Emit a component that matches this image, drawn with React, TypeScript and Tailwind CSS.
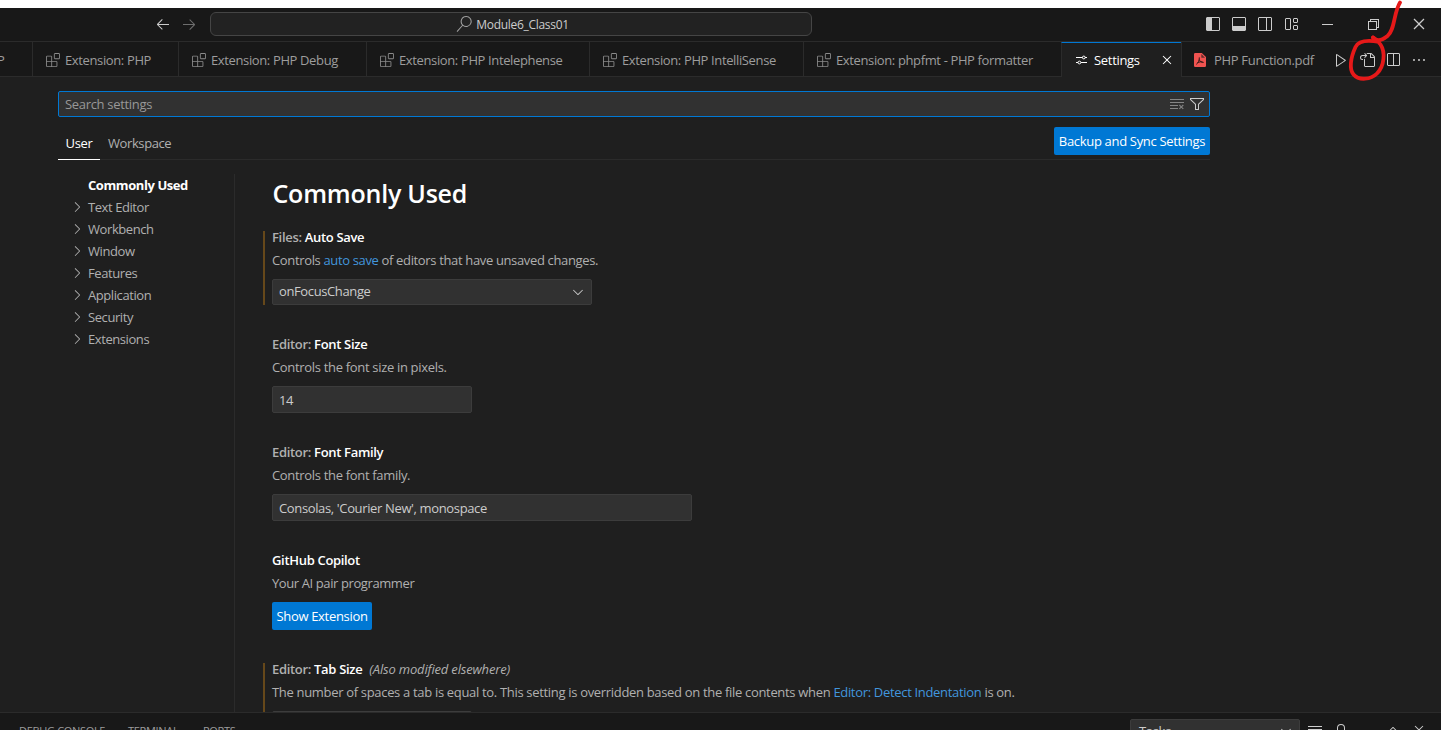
import React from "react";
import {
  VscArrowLeft, VscArrowRight, VscSearch, VscExtensions, VscClose, VscChromeClose,
  VscChromeMinimize, VscChromeRestore, VscPlay, VscGoToFile, VscSplitHorizontal, VscEllipsis,
  VscFilter, VscClearAll, VscChevronRight, VscChevronDown, VscChevronUp, VscLock,
  VscLayoutSidebarLeft, VscLayoutPanel, VscLayoutSidebarRightOff, VscLayout,
} from "react-icons/vsc";

const extensionTabs = [
  { label: "Extension: PHP", box: "w-[146px]" },
  { label: "Extension: PHP Debug", box: "w-[188px]" },
  { label: "Extension: PHP Intelephense", box: "w-[223px]" },
  { label: "Extension: PHP IntelliSense", box: "w-[214px]" },
  { label: "Extension: phpfmt - PHP formatter", box: "w-[258px]" },
];

const groups = ["Text Editor", "Workbench", "Window", "Features", "Application", "Security", "Extensions"];

function TitleBar() {
  return (
    <header className="flex h-[34px] shrink-0 items-center border-b border-[#2b2b2b] bg-[#181818] pb-px text-[#cccccc]">
      <VscArrowLeft className="ml-[155px] size-4" />
      <VscArrowRight className="ml-[10px] size-4 text-[#6e6e6e]" />
      <div className="ml-[13px] flex h-6 w-[602px] items-center justify-center rounded-md border border-[#454545] bg-[#222222]">
        <VscSearch className="mr-1 ml-[3px] size-4 text-[#a0a0a0]" />
        <span className="pt-px text-[12px] tracking-[-0.3px]">Module6_Class01</span>
      </div>
      <div className="ml-[393px] flex items-center gap-[10px]">
        <VscLayoutSidebarLeft className="size-4" />
        <VscLayoutPanel className="size-4" />
        <VscLayoutSidebarRightOff className="size-4" />
        <VscLayout className="size-4" />
      </div>
      <VscChromeMinimize className="ml-[20px] size-4" />
      <VscChromeRestore className="ml-[30px] size-4" />
      <VscChromeClose className="ml-[30px] size-4" />
    </header>
  );
}

function SlidersIcon() {
  return (
    <svg viewBox="0 0 16 16" className="mr-[5px] size-4 shrink-0" fill="none" stroke="currentColor">
      <path d="M3 5.5h6.5M12 5.5h2M3 10.5h2M8 10.5h6" strokeWidth="1.2" />
      <circle cx="10.8" cy="5.5" r="1.4" />
      <circle cx="6.4" cy="10.5" r="1.4" />
    </svg>
  );
}

function PdfIcon() {
  return (
    <svg viewBox="0 0 12 14" className="h-[14px] w-3">
      <path d="M1.2 0h6.6L12 4v8.8a1.2 1.2 0 0 1-1.2 1.2H1.2A1.2 1.2 0 0 1 0 12.8V1.2A1.2 1.2 0 0 1 1.2 0z" fill="#ef5350" />
      <path d="M7.3 1v3.7H11" fill="#181818" opacity=".65" />
      <path d="M2.3 11.3c2-1.2 3.2-4.2 3-6.9M5.3 6.4c.5 2 2 3.2 4.4 3M3.5 9.8c1.7-.9 3.3-1.2 5-1" fill="none" stroke="#301616" strokeWidth="1" />
    </svg>
  );
}

function TabBar() {
  return (
    <nav className="flex h-[35px] shrink-0 bg-[#181818] tracking-[-0.37px] text-[#9d9d9d]">
      <div className="flex w-8 items-center overflow-hidden border-b border-[#2b2b2b] pt-[3px]">
        <span className="-ml-[3px]">P</span>
      </div>
      {extensionTabs.map((t) => (
        <div key={t.label} className={`flex shrink-0 items-center border-b border-l border-[#2b2b2b] pl-[13px] ${t.box}`}>
          <VscExtensions className="mt-px mr-[5px] size-[14px] shrink-0 text-[#8a8a8a]" />
          <span className="whitespace-nowrap pt-[3px]">{t.label}</span>
        </div>
      ))}
      <div className="flex w-[120px] shrink-0 items-center border-t border-l border-l-[#2b2b2b] border-t-[#0078d4] bg-[#1f1f1f] pl-[11px] tracking-[-0.31px] text-white">
        <SlidersIcon />
        <span className="pt-px">Settings</span>
        <VscClose className="ml-auto mr-[6px] size-4" />
      </div>
      <div className="flex flex-1 items-center border-b border-l border-[#2b2b2b]">
        <span className="mt-px mr-2 ml-[12px]"><PdfIcon /></span>
        <span className="w-[119px] whitespace-nowrap pt-[3px] tracking-[-0.31px]">PHP Function.pdf</span>
        <div className="flex items-center gap-[10px] pt-[2px] text-[#cccccc]">
          <VscPlay className="size-4" />
          <VscGoToFile className="size-4" />
          <VscSplitHorizontal className="size-4" />
          <VscEllipsis className="size-4" />
        </div>
      </div>
    </nav>
  );
}

function Setting({ scope, name, note, desc, height, modified, bar, children }: {
  scope?: string; name: string; note?: string; desc: React.ReactNode; height: string;
  modified?: boolean; bar?: string; children: React.ReactNode;
}) {
  return (
    <section className={`relative ${height}`}>
      {modified && <i className={`absolute top-[3px] -left-[9px] w-[2px] bg-[#66481a] ${bar}`} />}
      <h2 className="h-[18px] font-semibold leading-[18px] text-white">
        {scope && <span className="text-[#b0b0b0]">{scope}: </span>}{name}
        {note && <em className="ml-[7px] font-normal tracking-[-0.18px] text-[#b0b0b0]">{note}</em>}
      </h2>
      <p className="mt-[5px] h-[18px] whitespace-nowrap leading-[18px]">{desc}</p>
      {children}
    </section>
  );
}

export default function App() {
  return (
    <div className="relative flex h-[730px] w-[1441px] flex-col overflow-hidden bg-[#1f1f1f] pt-2 font-['Open_Sans',sans-serif] text-[13px] tracking-[-0.32px] text-[#b0b0b0] shadow-[inset_0_8px_0_#fff]">
      <TitleBar />
      <TabBar />
      <main className="flex h-[635px] shrink-0 flex-col overflow-hidden pl-[58px] pt-[14px]">
        <div className="flex h-[26px] w-[1152px] shrink-0 items-center rounded-[2px] border border-[#0078d4] bg-[#313131] pl-[6px] pr-1">
          <span className="flex-1 pt-[2px] text-[#989898]">Search settings</span>
          <VscClearAll className="mr-1 size-4 text-[#858585]" />
          <VscFilter className="size-4 text-[#cccccc]" />
        </div>
        <div className="flex h-[43px] w-[1152px] shrink-0 border-b border-[#2b2b2b] pt-[10px]">
          <div className="flex h-[33px] w-[42px] items-center justify-center border-b border-white pt-px text-white">User</div>
          <div className="flex h-[33px] items-center pl-2 tracking-[-0.4px]">Workspace</div>
          <button className="ml-auto h-7 w-[156px] rounded-[2px] bg-[#0078d4] pt-[2px] text-white">Backup and Sync Settings</button>
        </div>
        <div className="flex flex-1 pt-[14px]">
          <aside className="w-[177px] shrink-0 border-r border-[#2b2b2b] tracking-[-0.42px]">
            <div className="h-[22px] pl-[30px] font-bold leading-[23px] text-white">Commonly Used</div>
            {groups.map((g) => (
              <div key={g} className="flex h-[22px] items-center pl-[11px]">
                <VscChevronRight className="mr-[3px] size-4" /><span className="pt-[2px]">{g}</span>
              </div>
            ))}
          </aside>
          <div className="pl-[37px]">
            <h1 className="h-[54px] pl-[0.5px] pt-[3px] text-[25px] font-semibold leading-[32px] tracking-[-0.22px] text-white">Commonly Used</h1>
            <Setting scope="Files" name="Auto Save" height="h-[107px]" modified bar="h-[74px]"
              desc={<span className="tracking-[-0.35px]">Controls <a className="text-[#4296dd]">auto save</a> of editors that have unsaved changes.</span>}>
              <div className="mt-[10px] flex h-[26px] w-[320px] items-center justify-between rounded-[2px] border border-[#3c3c3c] bg-[#313131] pl-[6px] pr-[5px] tracking-[-0.38px] text-[#cccccc]">
                <span className="pb-px">onFocusChange</span><VscChevronDown className="size-4" />
              </div>
            </Setting>
            <Setting scope="Editor" name="Font Size" height="h-[108px]" desc="Controls the font size in pixels.">
              <div className="mt-[10px] flex h-[27px] w-[200px] items-center rounded-[2px] border border-[#3c3c3c] bg-[#313131] pl-[6px] pt-[3px] text-[#cccccc]">14</div>
            </Setting>
            <Setting scope="Editor" name="Font Family" height="h-[108px]" desc="Controls the font family.">
              <div className="mt-[10px] flex h-[27px] w-[420px] items-center rounded-[2px] border border-[#3c3c3c] bg-[#313131] pl-[6px] pt-[3px] tracking-[-0.36px] text-[#cccccc]">Consolas, 'Courier New', monospace</div>
            </Setting>
            <Setting name="GitHub Copilot" height="h-[109px]" desc={<span className="tracking-[-0.4px]">Your AI pair programmer</span>}>
              <button className="mt-[10px] h-7 w-[100px] rounded-[2px] bg-[#0078d4] pt-[2px] text-white">Show Extension</button>
            </Setting>
            <Setting scope="Editor" name="Tab Size" note="(Also modified elsewhere)" height="h-[109px]" modified bar="h-[74px]"
              desc={<>The number of spaces a tab is equal to. This setting is overridden based on the file contents when <a className="text-[#4296dd]">Editor: Detect Indentation</a> is on.</>}>
              <div className="mt-[10px] h-[27px] w-[200px] rounded-[2px] border border-[#3c3c3c] bg-[#313131]" />
            </Setting>
          </div>
        </div>
      </main>
      <footer className="flex h-[40px] shrink-0 border-t border-[#2b2b2b] bg-[#181818] text-[11px] text-[#9d9d9d]">
        <span className="ml-[19px] mt-[10px] w-[109px]">DEBUG CONSOLE</span>
        <span className="mt-[10px] w-[75px]">TERMINAL</span>
        <span className="mt-[10px]">PORTS</span>
        <div className="ml-auto mt-[6px] flex h-[26px] w-[170px] justify-between rounded-[2px] border border-[#3c3c3c] bg-[#313131] pl-2 pr-[5px] pt-[2px] text-[13px] text-[#cccccc]">
          Tasks<VscChevronDown className="mt-px size-4" />
        </div>
        <div className="ml-[7px] mr-[14px] mt-[9px] flex text-[#cccccc]">
          <VscClearAll className="mt-px mr-[10px] size-4" />
          <VscLock className="mt-px mr-[36px] size-4" />
          <VscChevronUp className="mr-[10px] size-4" />
          <VscClose className="size-4" />
        </div>
      </footer>
      <svg viewBox="0 0 110 90" className="pointer-events-none absolute top-0 right-0 h-[90px] w-[110px]" fill="none" stroke="#e61919" strokeWidth="3.8" strokeLinecap="round" strokeLinejoin="round">
        <path d="M69 2.5C62.5 13 64 30 56.5 36C51.5 40 46 42 42 37.5" />
        <path d="M48 42C37 40 28 40 24.5 47C19.5 58 18 69 22.5 74.5C28 81 40 79.500 46 73.500C53.500 66 54.500 52 49.500 44.500C47 41 44.500 39 42 37.500" />
      </svg>
    </div>
  );
}
